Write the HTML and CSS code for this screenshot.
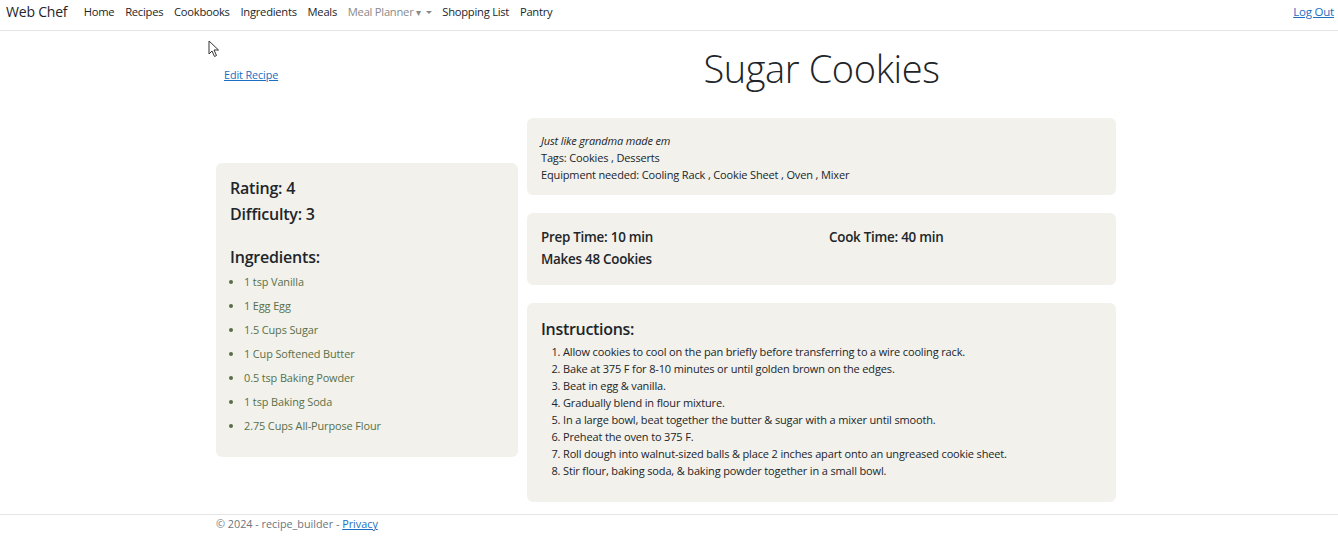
FILE: index.html
```html
<!DOCTYPE html>
<html lang="en">
<head>
<meta charset="utf-8">
<title>Sugar Cookies - Web Chef</title>
<link rel="stylesheet" href="styles.css">
</head>
<body>
<header class="navbar">
  <a class="brand" href="#">Web Chef</a>
  <nav class="nav-links">
    <a href="#">Home</a>
    <a href="#">Recipes</a>
    <a href="#">Cookbooks</a>
    <a href="#">Ingredients</a>
    <a href="#">Meals</a>
    <a href="#" class="muted">Meal Planner <span class="caret-big">&#9662;</span> <span class="caret-small"></span></a>
    <a href="#">Shopping List</a>
    <a href="#">Pantry</a>
  </nav>
  <a class="logout" href="#">Log Out</a>
</header>

<main class="container">
  <div class="top-row">
    <div class="left-col"><a class="edit-link" href="#">Edit Recipe</a></div>
    <div class="right-col"><h1 class="title">Sugar Cookies</h1></div>
  </div>
  <div class="content-row">
    <div class="left-col">
      <section class="card side-card">
        <h3 class="stat">Rating: 4</h3>
        <h3 class="stat">Difficulty: 3</h3>
        <h3 class="ing-title">Ingredients:</h3>
        <ul class="ingredients">
          <li>1 tsp Vanilla</li>
          <li>1 Egg Egg</li>
          <li>1.5 Cups Sugar</li>
          <li>1 Cup Softened Butter</li>
          <li>0.5 tsp Baking Powder</li>
          <li>1 tsp Baking Soda</li>
          <li>2.75 Cups All-Purpose Flour</li>
        </ul>
      </section>
    </div>
    <div class="right-col cards">
      <section class="card info-card">
        <div class="desc">Just like grandma made em</div>
        <div>Tags: Cookies , Desserts</div>
        <div>Equipment needed: Cooling Rack , Cookie Sheet , Oven , Mixer</div>
      </section>
      <section class="card time-card">
        <div class="time">Prep Time: 10 min</div>
        <div class="time">Cook Time: 40 min</div>
        <div class="time">Makes 48 Cookies</div>
      </section>
      <section class="card instr-card">
        <h3 class="instr-title">Instructions:</h3>
        <ol class="steps">
          <li>Allow cookies to cool on the pan briefly before transferring to a wire cooling rack.</li>
          <li>Bake at 375 F for 8-10 minutes or until golden brown on the edges.</li>
          <li>Beat in egg &amp; vanilla.</li>
          <li>Gradually blend in flour mixture.</li>
          <li>In a large bowl, beat together the butter &amp; sugar with a mixer until smooth.</li>
          <li>Preheat the oven to 375 F.</li>
          <li>Roll dough into walnut-sized balls &amp; place 2 inches apart onto an ungreased cookie sheet.</li>
          <li>Stir flour, baking soda, &amp; baking powder together in a small bowl.</li>
        </ol>
      </section>
    </div>
  </div>
</main>

<footer class="footer">
  <div class="footer-inner">&copy; 2024 - recipe_builder - <a href="#">Privacy</a></div>
</footer>

<svg class="cursor" width="12" height="18" viewBox="0 0 12 18"><path d="M1 1 L1 14 L4 11 L6.5 16.5 L8.5 15.5 L6 10 L10.5 10 Z" fill="#fff" stroke="#333" stroke-width="1"/></svg>
</body>
</html>
```

FILE: styles.css
```css
* { box-sizing: border-box; }

html, body {
  margin: 0;
  padding: 0;
}

body {
  font-family: "Open Sans", "Noto Sans", sans-serif;
  color: #212529;
  background: #fff;
  font-size: 11px;
  position: relative;
  min-height: 543px;
}

a { color: #1b6ec2; }

.navbar {
  display: flex;
  align-items: flex-start;
  height: 31px;
  border-bottom: 1px solid #e5e5e5;
  padding: 3px 4px 0 6px;
  line-height: 18px;
}

.brand {
  font-size: 14px;
  color: #212529;
  text-decoration: none;
  margin-right: 11px;
  letter-spacing: -0.2px;
}

.nav-links {
  display: flex;
  flex: 1;
}

.nav-links a {
  color: #212529;
  text-decoration: none;
  font-size: 11.2px;
  padding: 0 5.4px;
  letter-spacing: -0.25px;
}

.nav-links a.muted { color: #8a8a8a; }

.caret-big { font-size: 10px; }

.caret-small {
  display: inline-block;
  width: 0;
  height: 0;
  border-left: 3px solid transparent;
  border-right: 3px solid transparent;
  border-top: 3px solid #8a8a8a;
  vertical-align: 2px;
  margin-left: 2px;
}

.logout {
  font-size: 11.5px;
  letter-spacing: -0.2px;
}

.container {
  width: 900px;
  margin: 0 auto 0 216px;
}

.top-row {
  display: flex;
  gap: 9px;
  height: 87px;
}

.left-col {
  width: 302px;
  flex: none;
}

.right-col {
  flex: 1;
  min-width: 0;
}

.edit-link {
  display: inline-block;
  margin: 36px 0 0 8px;
  font-size: 10.8px;
  letter-spacing: -0.1px;
}

.title {
  margin: 12px 0 0;
  font-size: 38px;
  font-weight: 300;
  text-align: center;
  color: #212529;
  line-height: 50px;
  letter-spacing: -0.4px;
}

.content-row {
  display: flex;
  gap: 9px;
  align-items: center;
}

.card {
  background: #f2f1ec;
  border-radius: 6px;
}

.cards {
  display: flex;
  flex-direction: column;
  gap: 18px;
}

.side-card {
  padding: 12px 14px 19px;
}

.stat {
  margin: 0;
  font-size: 16px;
  font-weight: 600;
  line-height: 26px;
  letter-spacing: -0.2px;
}

.ing-title {
  margin: 17px 0 0;
  font-size: 16px;
  font-weight: 600;
  line-height: 26px;
  letter-spacing: -0.2px;
}

.ingredients {
  margin: 0;
  padding-left: 14px;
  color: #587048;
  font-size: 10.9px;
  line-height: 24px;
  letter-spacing: -0.1px;
}

.info-card {
  padding: 14px 14px 12px;
  font-size: 11px;
  line-height: 17px;
  letter-spacing: -0.15px;
}

.desc { font-style: italic; }

.time-card {
  padding: 13px 14px 15px;
  display: grid;
  grid-template-columns: 288px 1fr;
  row-gap: 0;
}

.time {
  font-size: 13.4px;
  font-weight: 600;
  line-height: 22px;
  letter-spacing: -0.25px;
}

.instr-card {
  padding: 13px 14px 23px;
}

.instr-title {
  margin: 0 0 1px;
  font-size: 16px;
  font-weight: 600;
  line-height: 26px;
  letter-spacing: -0.3px;
}

.steps {
  margin: 0;
  padding-left: 22px;
  font-size: 11px;
  line-height: 17px;
  letter-spacing: -0.15px;
}

.footer {
  position: absolute;
  left: 0;
  right: 0;
  top: 514px;
  border-top: 1px solid #e5e5e5;
}

.footer-inner {
  margin-left: 216px;
  padding-top: 1px;
  color: #6c757d;
  font-size: 10.8px;
  line-height: 16px;
}

.cursor {
  position: absolute;
  left: 208px;
  top: 40px;
}
```
